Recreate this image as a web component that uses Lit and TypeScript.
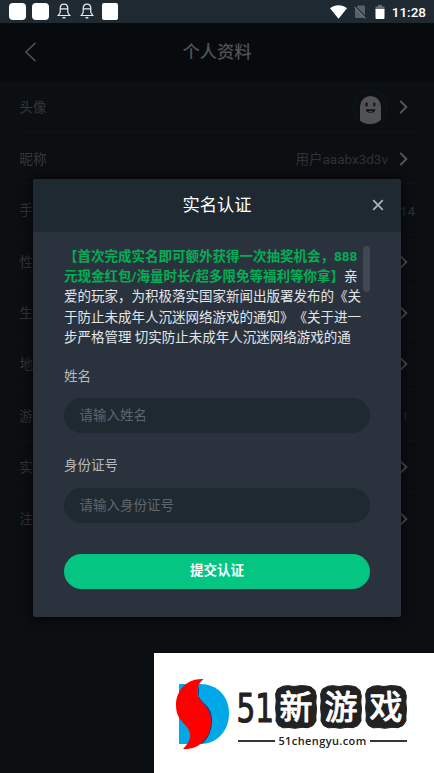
import { LitElement, html, css, svg, nothing } from "lit";
import { customElement } from "lit/decorators.js";

interface Row {
  label: string;
  value?: string;
  avatar?: boolean;
  arrow?: boolean;
}

const rows: Row[] = [
  { label: "头像", avatar: true, arrow: true },
  { label: "昵称", value: "用户aaabx3d3v", arrow: true },
  { label: "手机", value: "14" },
  { label: "性别", arrow: true },
  { label: "生日", arrow: true },
  { label: "地区", arrow: true },
  { label: "游戏", value: "!" },
  { label: "实名", arrow: true },
  { label: "注销", arrow: true },
];

const bell = html`<svg width="14" height="17" viewBox="0 0 14 17" fill="none" stroke="#e8ecee" stroke-width="1.2">
  <path d="M3.2 10V5.600C3.200 3 4.800 1.200 7 1.200s3.800 1.800 3.800 4.400V10M3.200 5.800h7.600M3.200 9.500L1.200 12.500h11.600l-2-3" />
  <path d="M5.600 14.700h2.800" stroke-width="1.500" />
</svg>`;

@customElement("status-bar")
class StatusBar extends LitElement {
  static styles = css`
    :host {
      display: flex;
      height: 23px;
      align-items: center;
      background: #1f2932;
      color: #fff;
      box-sizing: border-box;
      padding: 0 8px 0 9px;
      font: 500 13.5px/23px Roboto, sans-serif;
    }
    .block { width: 17px; height: 17px; border-radius: 4px; background: #fff; margin-right: 6px; }
    .block.sharp { width: 16px; border-radius: 2px; margin: 0; }
    svg { display: block; flex: none; }
    .bell { margin: 0 9px 0 2px; }
    .bell + .bell { margin: 0 8px 0 0; }
    .space { flex: 1; }
    .wifi { margin: 0 7px 0 0; }
    .sim { margin-right: 9px; }
    .batt { margin-right: 7px; }
    .time { padding-top: 1px; }
  `;
  render() {
    return html`
      <div class="block"></div>
      <div class="block"></div>
      <div class="bell">${bell}</div>
      <div class="bell">${bell}</div>
      <div class="block sharp"></div>
      <div class="space"></div>
      <svg class="wifi" width="17" height="14" viewBox="0 0 17 14"><path d="M0 3.3C5-.7 12-.7 17 3.3L8.5 13.8z" fill="#fff" /></svg>
      <svg class="sim" width="12" height="14" viewBox="0 0 12 14">
        <path d="M4.2.5H10q1 0 1 1V13H2q-1 0-1-1V3.7z" fill="#596169" />
        <path d="M0 0L12 12.400" stroke="#1f2932" stroke-width="1.200" />
        <path d="M.2 1.600L11.600 13.600" stroke="#7b8389" stroke-width="1" />
      </svg>
      <svg class="batt" width="10" height="14" viewBox="0 0 10 14">
        <path d="M3 0h4v1.5h2.5V5H.5V1.500H3z" fill="#667078" />
        <path d="M.5 4h9v9q0 1-1 1h-7q-1 0-1-1z" fill="#fff" />
      </svg>
      <span class="time">11:28</span>
    `;
  }
}

@customElement("profile-page")
class ProfilePage extends LitElement {
  static styles = css`
    :host { display: block; color: #34383b; font: 13.5px/20px Roboto, "Noto Sans CJK SC", sans-serif; }
    header {
      height: 58px;
      background: #070b0e;
      display: grid;
      grid-template-columns: 60px 1fr 60px;
      align-items: center;
      text-align: center;
    }
    .back { display: block; margin-left: 24px; }
    h1 { margin: 0; font-size: 17.300px; line-height: 24px; font-weight: 500; color: #505254; }
    .list { padding: 0 19px 0 19.5px; }
    .row {
      height: 51.45px;
      box-sizing: border-box;
      border-bottom: 1px solid #0f1417;
      display: flex;
      align-items: center;
      padding-top: 2px;
    }
    .row:last-child { border: 0; }
    .grow { flex: 1; }
    .value { color: #2d3235; font-size: 13.5px; padding-top: 1px; }
    .arrow { display: block; margin: 0 7px 0 11px; }
    .mark { margin-right: 8px; }
  `;
  render() {
    return html`
      <header>
        <svg class="back" width="13" height="20" viewBox="0 0 13 20"><path d="M11.500.8L2 10l9.500 9.300" fill="none" stroke="#505254" stroke-width="1.500" /></svg>
        <h1>个人资料</h1>
      </header>
      <div class="list">
        ${rows.map(
          (r) => html`<div class="row">
            <span>${r.label}</span>
            <span class="grow"></span>
            ${r.avatar
              ? html`<svg width="36" height="36" viewBox="0 0 36 36">
                  <defs><clipPath id="c"><circle cx="18" cy="18" r="17" /></clipPath></defs>
                  <circle cx="18" cy="18" r="17" fill="#0b1014" stroke="#11171a" />
                  <path clip-path="url(#c)" d="M8 36V17.500a10.500 10.500 0 0 1 21 0V36z" fill="#525252" />
                  <rect x="13.500" y="13.500" width="2.200" height="4" rx="1" fill="#111518" />
                  <rect x="21.200" y="13.500" width="2.200" height="4" rx="1" fill="#111518" />
                  <path d="M14 20.300h9.200v1q-.8 2.700-4.600 2.700t-4.600-2.700z" fill="#111518" />
                  <path d="M16.800 22.700h3.600" stroke="#555" />
                </svg>`
              : nothing}
            ${r.value ? html`<span class="value ${r.value === "!" ? "mark" : ""}">${r.value}</span>` : nothing}
            ${r.arrow
              ? html`<svg class="arrow" width="9" height="14" viewBox="0 0 9 14"><path d="M1.200.8L7.400 7l-6.200 6.200" fill="none" stroke="#585a5b" stroke-width="1.800" /></svg>`
              : nothing}
          </div>`
        )}
      </div>
    `;
  }
}

@customElement("verify-dialog")
class VerifyDialog extends LitElement {
  static styles = css`
    :host {
      display: block;
      box-sizing: border-box;
      height: 438px;
      border-radius: 3px;
      overflow: hidden;
      background: #2a333d;
      box-shadow: 0 1px 12px 2px rgba(6, 4, 6, 0.8);
      font: 13.5px/20.4px Roboto, "Noto Sans CJK SC", sans-serif;
      text-spacing-trim: space-all;
      color: #e2e6ea;
    }
    .head {
      height: 53px;
      box-sizing: border-box;
      padding-bottom: 2px;
      background: #1f2931;
      display: grid;
      grid-template-columns: 46px 1fr 46px;
      align-items: center;
      justify-items: center;
    }
    h2 { grid-column: 2; margin: 0; font-size: 17.300px; line-height: 24px; font-weight: 400; color: #fff; }
    .body { padding: 14px 31px 0; }
    .notice { display: flex; justify-content: space-between; height: 102px; white-space: nowrap; }
    .copy { width: 298px; margin-top: -0.4px; }
    .copy div { height: 20.4px; }
    b { color: #04ac55; font-weight: 700; }
    .thumb { width: 7.500px; height: 46px; border-radius: 4px; background: #404951; flex: none; }
    label { display: block; height: 20px; line-height: 20px; color: #b5b9bc; }
    .first { margin-top: 18px; }
    .second { margin-top: 22px; }
    .field {
      height: 35px;
      margin-top: 12px;
      border-radius: 18px;
      background: #1f2931;
      padding-left: 15.500px;
      line-height: 35px;
      color: #5e666d;
    }
    .second + .field { margin-top: 13px; }
    .submit {
      display: block;
      width: 100%;
      height: 35px;
      margin-top: 31px;
      padding: 0 0 2px;
      border: 0;
      border-radius: 18px;
      background: #04c581;
      color: #fff;
      font: 700 13.5px/33px Roboto, "Noto Sans CJK SC", sans-serif;
    }
  `;
  render() {
    return html`
      <div class="head">
        <h2>实名认证</h2>
        <svg width="12" height="12" viewBox="0 0 12 12"><path d="M1.200 1.200l9.600 9.600m0-9.600l-9.600 9.600" stroke="#a9afb4" stroke-width="1.900" /></svg>
      </div>
      <div class="body">
        <div class="notice">
          <div class="copy">
            <div><b>【首次完成实名即可额外获得一次抽奖机会，888</b></div>
            <div><b>元现金红包/海量时长/超多限免等福利等你拿】</b>亲</div>
            <div>爱的玩家，为积极落实国家新闻出版署发布的《关</div>
            <div>于防止未成年人沉迷网络游戏的通知》《关于进一</div>
            <div>步严格管理 切实防止未成年人沉迷网络游戏的通</div>
          </div>
          <div class="thumb"></div>
        </div>
        <label class="first">姓名</label>
        <div class="field">请输入姓名</div>
        <label class="second">身份证号</label>
        <div class="field">请输入身份证号</div>
        <button class="submit">提交认证</button>
      </div>
    `;
  }
}

const tile = "M8 1.200L13 .7 19 1.500 26 .6 32 1 36 2 40 5.500 41.300 11 40.800 17 41.500 24 40.900 31 41 36 38 40.500 33 42.700 27 42.300 20 43.300 14 42.500 8 42.800 3.500 40.500 1 36 1.300 30 .6 23 1.200 16 .6 9 2.500 4z";

@customElement("site-badge")
class SiteBadge extends LitElement {
  static styles = css`
    :host { display: flex; background: #fff; color: #222; box-sizing: border-box; padding: 25px 0 0 21px; }
    .logo { flex: none; display: block; }
    .words { margin: 7px 0 0 6px; }
    .title { display: flex; height: 45px; gap: 3px; }
    .num { display: block; margin-right: -1.5px; }
    .digits { font: 39px "DejaVu Sans", sans-serif; fill: #222; stroke: #222; stroke-width: 1.2; stroke-linejoin: round; }
    .tile { display: block; }
    .glyph { font: 400 33px/42px "Noto Sans CJK SC", sans-serif; fill: #fff; stroke: #fff; stroke-width: 1.1; stroke-linejoin: round; stroke-linecap: round; }
    .site { display: flex; align-items: center; gap: 3px; width: 169px; height: 15px; margin-top: 3px; }
    .rule { flex: 1; height: 2px; background: #333638; }
    .url { font: 600 11px/15px "Open Sans", sans-serif; letter-spacing: 0.4px; }
  `;
  render() {
    return html`
      <svg class="logo" width="57" height="73" viewBox="0 0 57 73">
        <path d="M4 6H25C42 6 54 18 54 35.500S42 66 25 66H4z" fill="#00a8e8" />
        <path d="M26 5C19 13 24 21 31 27C41 37 38 57 27 66L24 62V8z" fill="#123a82" />
        <path d="M28.500 1C12 0 1 12 1 27C1 37 5 42 11 48C17 55 17 62 8 71C24 72 36 60 36 44C36 35 33 30 27 24C20 17 21 7 28.500 1z" fill="#f00" />
      </svg>
      <div class="words">
        <div class="title">
          <svg class="num" width="35" height="44" viewBox="0 0 35 44" overflow="visible">
            <text class="digits" x="-1.500" y="37" textLength="37.500" lengthAdjust="spacingAndGlyphs">51</text>
          </svg>
          ${["新", "游", "戏"].map(
            (g) => html`<svg class="tile" width="42" height="44" viewBox="0 0 42 44" overflow="visible">
              <path d=${tile} fill="#222" stroke="#222" stroke-linejoin="round" />
              ${svg`<text class="glyph" x="21" y="33.500" text-anchor="middle">${g}</text>`}
            </svg>`
          )}
        </div>
        <div class="site"><span class="rule"></span><span class="url">51chengyu.com</span><span class="rule"></span></div>
      </div>
    `;
  }
}

@customElement("app-root")
class AppRoot extends LitElement {
  static styles = css`
    :host { display: block; position: relative; width: 434px; height: 773px; overflow: hidden; background: #0b0f12; }
    verify-dialog { position: absolute; left: 33px; top: 179px; width: 368px; }
    site-badge { position: absolute; right: 0; bottom: 0; width: 280px; height: 120px; }
  `;
  render() {
    return html`
      <status-bar></status-bar>
      <profile-page></profile-page>
      <verify-dialog></verify-dialog>
      <site-badge></site-badge>
    `;
  }
}
